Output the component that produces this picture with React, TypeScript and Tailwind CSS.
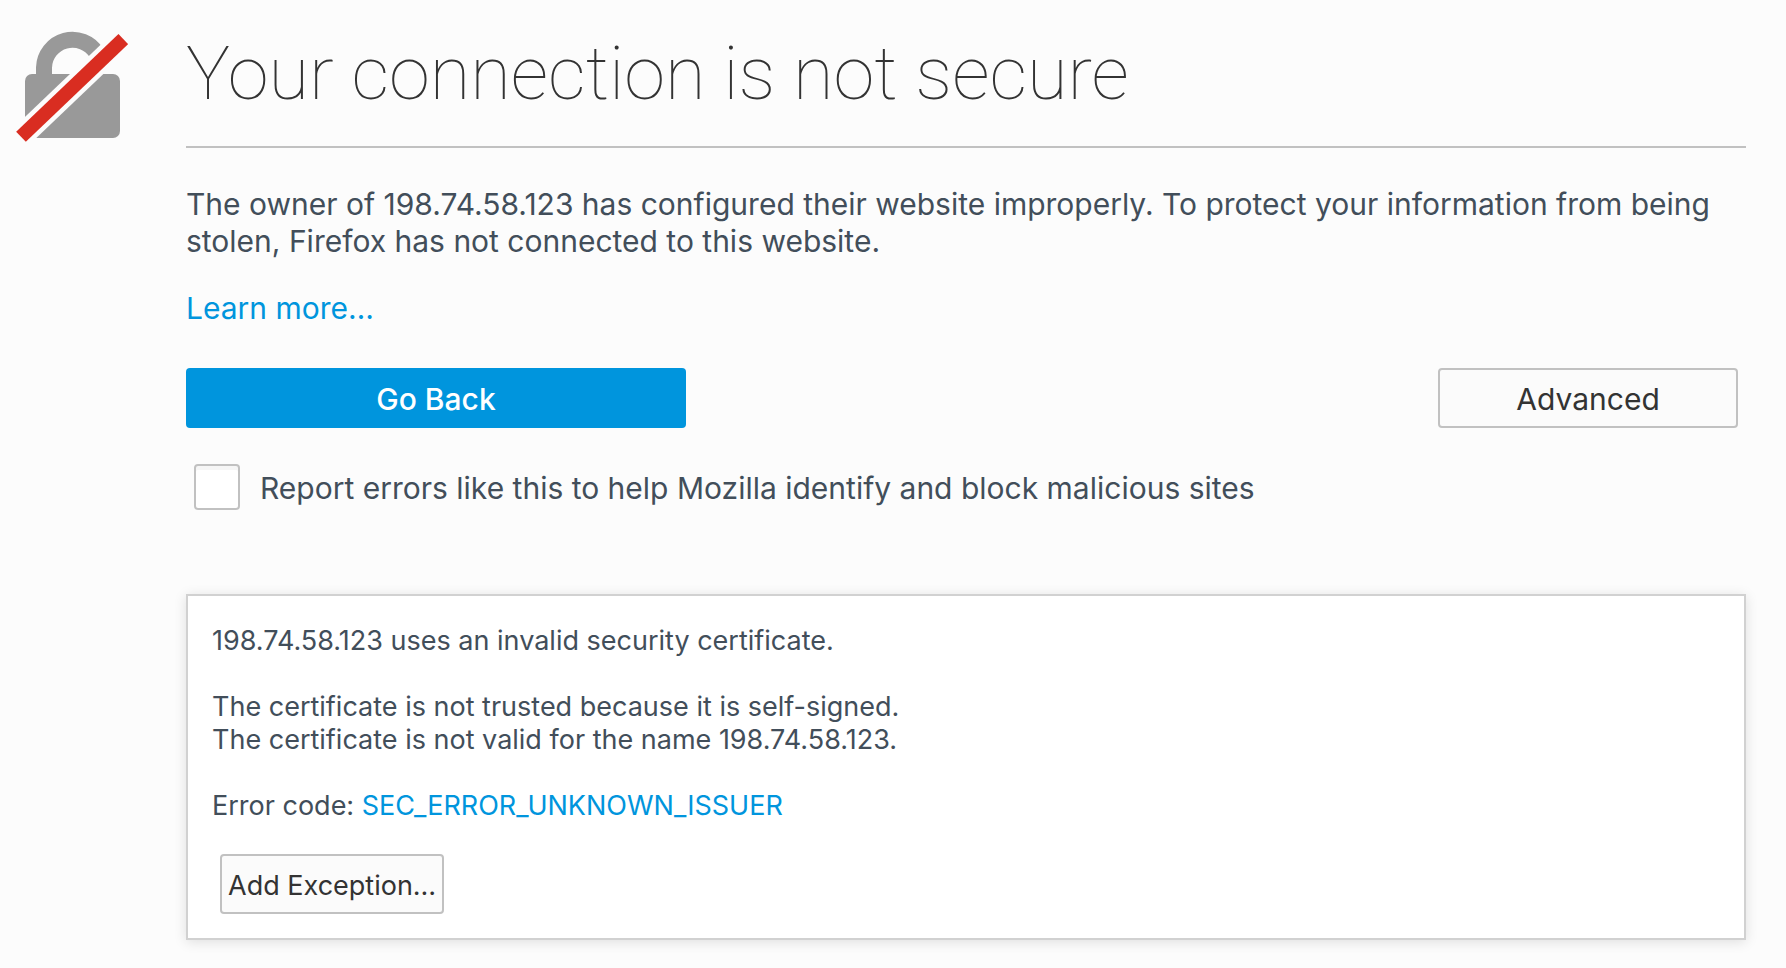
function InsecureLockIcon() {
  return (
    <svg viewBox="0 0 112 112" className="block w-28 shrink-0" aria-hidden="true">
      <path
        d="M28 46V37.500A28.500 28.500 0 0 1 80.700 23.250"
        fill="none"
        stroke="#999999"
        strokeWidth="16"
      />
      <rect x="9" y="44" width="95" height="64" rx="7" fill="#999999" />
      <path d="M-4 115.300L116 0.700" stroke="#fcfcfc" strokeWidth="23" />
      <path d="M5 106.700L107.300 9" stroke="#d92d21" strokeWidth="14" />
    </svg>
  );
}

const outlined =
  "h-15 rounded-sm border-2 border-[#c1c1c1] bg-[#fbfbfb] text-[#333333] hover:bg-[#ebebeb]";

export default function App() {
  return (
    <main className="flex min-h-screen items-start gap-[58px] bg-[#fcfcfc] pt-[30px] pr-10 pl-4 font-['Inter',sans-serif] text-[30px] leading-[37px] text-[#424e5a]">
      <InsecureLockIcon />
      <div className="min-w-0 flex-1">
        <h1 className="border-b-2 border-[#c1c1c1] pb-7 font-['Roboto',sans-serif] text-[74px] leading-[88px] font-thin text-[#333333]">
          Your connection is not secure
        </h1>

        <p className="mt-[38px]">
          The owner of 198.74.58.123 has configured their website improperly. To
          protect your information from being stolen, Firefox has not connected
          to this website.
        </p>
        <p className="mt-[30px]">
          <a href="#learn-more" className="text-[#0095dd]">
            Learn more…
          </a>
        </p>

        <div className="mt-[41px] flex justify-between pr-2">
          <button
            type="button"
            className="h-15 w-[500px] rounded-sm bg-[#0095dd] pt-0.5 font-medium text-white"
          >
            Go Back
          </button>
          <button type="button" className={`${outlined} w-[300px] pt-0.5`}>
            Advanced
          </button>
        </div>

        <div className="mt-9 flex items-center gap-5 pl-2">
          <input
            id="report"
            type="checkbox"
            className="size-[46px] appearance-none rounded-sm border-2 border-[#c1c1c1] bg-white shadow-[inset_0_4px_0_#f6f6f6] checked:bg-[#0095dd]"
          />
          <label htmlFor="report" className="pt-0.5">
            Report errors like this to help Mozilla identify and block malicious
            sites
          </label>
        </div>

        <section className="mt-[84px] border-2 border-[#d1d1d1] bg-white p-6 pt-7 text-[27px] leading-[33px] shadow-[0_2px_12px_rgba(0,0,0,0.12)]">
          <p>198.74.58.123 uses an invalid security certificate.</p>
          <p className="mt-[33px]">
            The certificate is not trusted because it is self-signed.
            <br />
            The certificate is not valid for the name 198.74.58.123.
          </p>
          <p className="mt-[33px]">
            Error code:{" "}
            <a href="#error-code" className="text-[#0095dd]">
              SEC_ERROR_UNKNOWN_ISSUER
            </a>
          </p>
          <button type="button" className={`${outlined} mt-8 ml-2 px-1.5 pt-0.5`}>
            Add Exception…
          </button>
        </section>
      </div>
    </main>
  );
}
